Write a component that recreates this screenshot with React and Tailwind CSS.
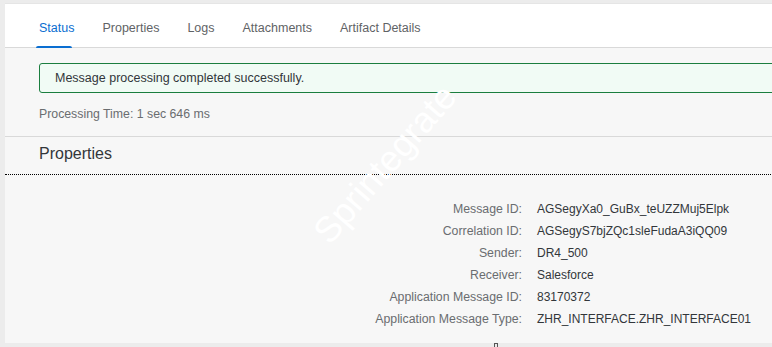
import React from 'react';

const tabs = ['Status', 'Properties', 'Logs', 'Attachments', 'Artifact Details'];

const props = [
    ['Message ID:', 'AGSegyXa0_GuBx_teUZZMuj5Elpk'],
    ['Correlation ID:', 'AGSegyS7bjZQc1sleFudaA3iQQ09'],
    ['Sender:', 'DR4_500'],
    ['Receiver:', 'Salesforce'],
    ['Application Message ID:', '83170372'],
    ['Application Message Type:', 'ZHR_INTERFACE.ZHR_INTERFACE01'],
];

const App = () => {
    return (
        <div className="relative w-[772px] h-[347px] overflow-hidden bg-[#ececec] font-['Liberation_Sans',Arial,sans-serif]">

            {/* CARD */}
            <div className="ml-[5px] mt-[3px] w-[900px] h-[340px] bg-[#f7f7f7] border-t border-[#e5e5e5]">

                {/* TABS */}
                <div className="h-[44px] bg-white border-b border-[#d9d9d9] flex items-end pl-[34px] gap-[28px]">
                    {tabs.map((t, i) => (
                        <div key={t} className={`relative pb-[9px] text-[12.5px] ${i === 0 ? 'text-[#0a6ed1]' : 'text-[#5f6366]'}`}>
                            {t}
                            {i === 0 && <div className="absolute left-[-3px] right-[2px] bottom-[-1px] h-[2px] bg-[#0a6ed1] rounded-t-sm"></div>}
                        </div>
                    ))}
                </div>

                {/* STATUS */}
                <div className="pl-[34px]">
                    <div className="mt-[15px] h-[30px] flex items-center pl-[15px] bg-[#f1fbf5] border border-[#1b7e3f] rounded-[3px] text-[12.5px] text-[#32363a]">
                        Message processing completed successfully.
                    </div>
                    <div className="mt-[13px] leading-[16px] text-[12.3px] text-[#6a6d70]">
                        Processing Time: 1 sec 646 ms
                    </div>
                </div>

                <div className="mt-[14px] border-t border-[#d9d9d9]"></div>

                {/* PROPERTIES */}
                <div className="pl-[34px] mt-[7px] leading-[20px] text-[16px] text-[#32363a]">
                    Properties
                </div>

                <div className="mt-[10px] border-t border-dotted border-black"></div>

                <div className="mt-[24px] grid grid-cols-[517px_1fr] gap-x-[15px] leading-[21.9px]">
                    {props.map(([label, value]) => (
                        <React.Fragment key={label}>
                            <div className="text-right text-[12.3px] text-[#6a6d70]">{label}</div>
                            <div className="text-[12px] text-[#32363a]">{value}</div>
                        </React.Fragment>
                    ))}
                </div>
            </div>

            {/* small marker */}
            <div className="absolute left-[494px] top-[343px] w-[4px] h-[4px] border-t border-l border-r border-[#555]"></div>

            {/* WATERMARK */}
            <div className="absolute left-[385px] top-[164px] -translate-x-1/2 -translate-y-1/2 rotate-[-49deg] text-white text-[36px] font-light whitespace-nowrap pointer-events-none">
                Sprintegrate
            </div>
        </div>
    );
};

export default App;
